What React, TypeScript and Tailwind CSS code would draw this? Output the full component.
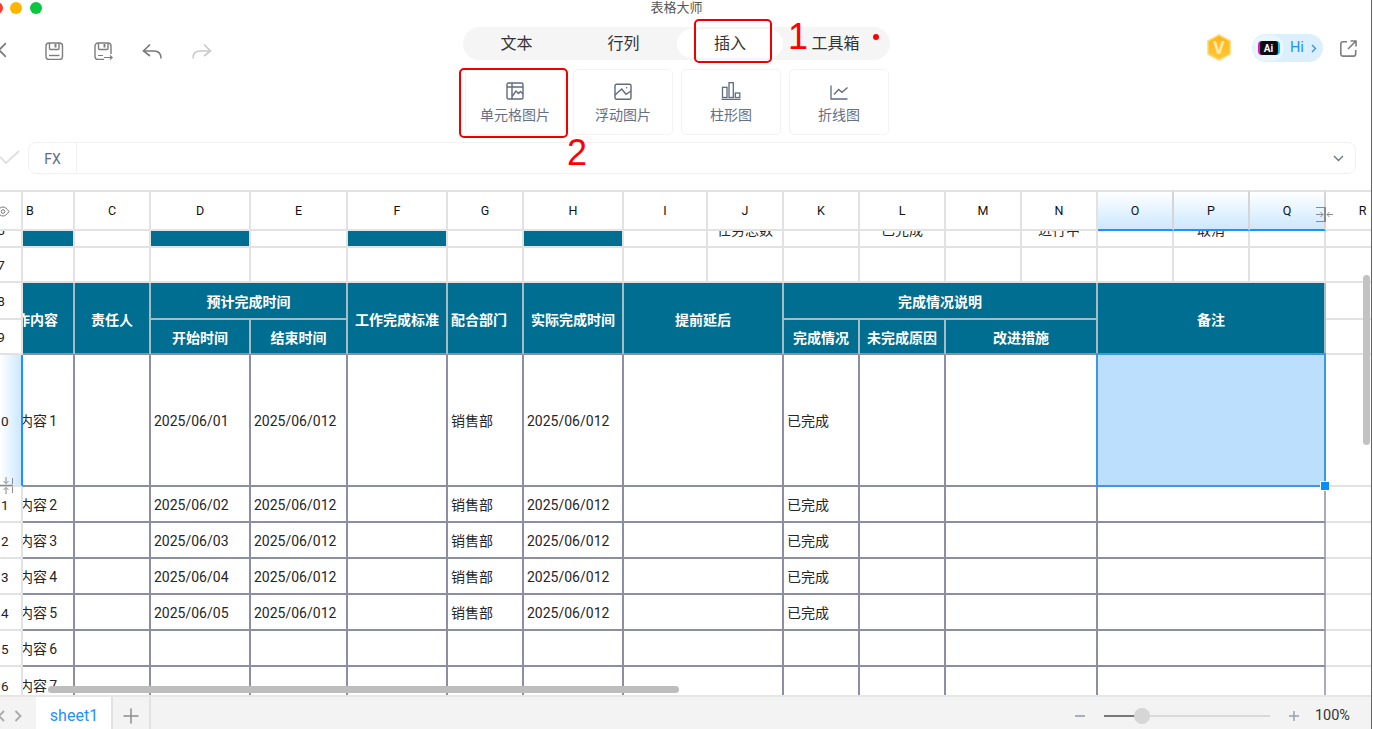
import React from "react";

const light = "border-r-2 border-b-2 border-[#e2e2e2]";
const dark = "border-r-2 border-b-2 border-[#8c8ea3]";
const darkEnd = "border-r-2 border-r-[#a9abbc] border-b-2 border-b-[#8c8ea3]";
const teal = "bg-[#006e91] border-r-2 border-b-2 border-[#a6bcc4] pt-[4px] text-white font-semibold text-[14px] flex items-center justify-center whitespace-nowrap";
const tealLow = "bg-[#006e91] border-r-2 border-r-[#a6bcc4] border-b-2 border-b-[#8c8ea3] pt-[4px] text-white font-semibold text-[14px] flex items-center justify-center whitespace-nowrap overflow-hidden";
const cellText = "flex items-center overflow-hidden whitespace-nowrap pt-[2px] text-[14px] text-[#262626]";

function RowNo({ n }: { n: string }) {
  return <div className="ml-[-21px] w-[44px] shrink-0 pt-[2px] text-center text-[13.500px] text-[#222]">{n}</div>;
}

function Item({ label, num }: { label: string; num: string }) {
  return (
    <span className="shrink-0">
      {label}
      <span className="ml-[2px]">{num}</span>
    </span>
  );
}

function Save({ arrow }: { arrow?: boolean }) {
  return (
    <svg width="19" height="19" viewBox="0 0 19 19" fill="none" stroke="#7d7d7d" strokeWidth="1.4">
      {arrow ? (
        <path d="M10 17.5H4a3 3 0 0 1-3-3V4a3 3 0 0 1 3-3h10a3 3 0 0 1 3 3v8" />
      ) : (
        <rect x="1" y="1" width="16.5" height="16.5" rx="3" />
      )}
      <path d="M4.5 1v5.5a1 1 0 0 0 1 1h7.5a1 1 0 0 0 1-1V1" />
      <path d="M10.5 2v3.5" strokeWidth="2" />
      {!arrow && <path d="M4 13.5h10.5" />}
      {arrow && <path d="M4 13.5h5M10 15.5h8M16 13.5l2.2 2-2.2 2" strokeWidth="1.2" />}
    </svg>
  );
}

function Undo({ color, flip }: { color: string; flip?: boolean }) {
  return (
    <svg width="21" height="16" viewBox="0 0 21 16" fill="none" stroke={color} strokeWidth="1.6" className={flip ? "-scale-x-100" : ""}>
      <path d="M8 1.5 1.5 8 8 13" />
      <path d="M1.5 8H12c4 0 7 2.5 7 7.5" />
    </svg>
  );
}

const toolStroke = "#5f6b7e";

function CellImgIcon() {
  return (
    <svg width="18" height="18" viewBox="0 0 18 18" fill="none" stroke={toolStroke} strokeWidth="1.4">
      <rect x="1" y="1" width="16" height="16" rx="1.5" />
      <path d="M1 5h16M6 1v16" />
      <path d="M6 14.500 10 9l2.500 2.500 2-2 2.500 2.500" />
    </svg>
  );
}
function FloatImgIcon() {
  return (
    <svg width="18" height="18" viewBox="0 0 18 18" fill="none" stroke={toolStroke} strokeWidth="1.4">
      <rect x="1" y="2.300" width="16" height="15" rx="1.500" />
      <path d="M1 13l6.700-6 4.300 5.300 5-3.300" />
      <circle cx="12.700" cy="5.700" r="0.800" fill={toolStroke} stroke="none" />
    </svg>
  );
}
function BarIcon() {
  return (
    <svg width="20" height="18" viewBox="0 0 20 18" fill="none" stroke={toolStroke} strokeWidth="1.300">
      <path d="M0.500 17.400h19" />
      <rect x="1.500" y="5.300" width="4.500" height="10.200" />
      <rect x="8" y="0.700" width="4.300" height="14.800" />
      <rect x="14.300" y="11" width="4.500" height="4.500" />
    </svg>
  );
}
function LineIcon() {
  return (
    <svg width="18" height="18" viewBox="0 0 18 18" fill="none" stroke={toolStroke} strokeWidth="1.300">
      <path d="M1 3.500V17h16.500" />
      <path d="M4 12.500 8.700 7.500 12 10.300 17.500 5.500" />
    </svg>
  );
}

function ToolCard({ icon, label }: { icon: React.ReactNode; label: string }) {
  return (
    <div className="flex h-[66px] w-[100px] flex-col items-center rounded-[5px] border border-[#f3f3f3] pt-[12px]">
      <div className="flex h-[18px] items-center">{icon}</div>
      <div className="mt-[5px] text-[14px] leading-[20px] text-[#667085]">{label}</div>
    </div>
  );
}

function ResizeH() {
  return (
    <svg width="18" height="15" viewBox="0 0 18 15" fill="none" stroke="#8a8a8a" strokeWidth="1">
      <path d="M0 7.500h7M4.500 5 7 7.500 4.500 10M17 7.500h-6M13.500 5 11 7.500l2.500 2.500" />
      <path d="M0 0.500h8M0 14.500h8" />
      <path d="M9 0v15" strokeWidth="2" />
    </svg>
  );
}
function ResizeV() {
  return (
    <svg width="14" height="17" viewBox="0 0 14 17" fill="none" stroke="#8a8a8a" strokeWidth="1">
      <path d="M6 0v6.500M3.500 4 6 6.500 8.500 4M6 17v-6.500M3.500 13 6 10.500 8.500 13" />
      <path d="M12.500 1v6M12.500 10v6" />
      <path d="M0 8.500h13" strokeWidth="1.500" />
    </svg>
  );
}

const letters = ["C", "D", "E", "F", "G", "H", "I", "J", "K", "L", "M", "N"];

function Blank({ c }: { c: string }) {
  return <div className={c} />;
}

function DataRow({ no, num, start, end, dept, state, last }: { no: string; num: string; start?: string; end?: string; dept?: string; state?: string; last?: boolean }) {
  const v = last ? "items-start leading-[34px]" : "";
  return (
    <>
      <div className={`${light} flex items-center overflow-hidden ${v}`}>
        <RowNo n={no} />
      </div>
      <div className={`${dark} ${cellText} ${v} justify-end pr-[16px]`}>
        <Item label="工作内容" num={num} />
      </div>
      <Blank c={dark} />
      <div className={`${dark} ${cellText} ${v} pl-[3px]`}>{start}</div>
      <div className={`${dark} ${cellText} ${v} pl-[3px]`}>{end}</div>
      <Blank c={dark} />
      <div className={`${dark} ${cellText} ${v} pl-[3px]`}>{dept}</div>
      <div className={`${dark} ${cellText} ${v} pl-[3px]`}>{end}</div>
      <Blank c={`${dark} col-span-2`} />
      <div className={`${dark} ${cellText} ${v} pl-[3px]`}>{state}</div>
      <Blank c={dark} />
      <Blank c={`${dark} col-span-2`} />
      <Blank c={`${darkEnd} col-span-3`} />
      <Blank c={light} />
    </>
  );
}

function Sheet() {
  return (
    <div className="relative h-[505px] shrink-0 overflow-hidden">
      <div className="grid h-[505px] grid-cols-[23px_52px_76px_100px_97px_100px_76px_100px_84px_76px_76px_86px_76px_76px_76px_76px_76px_47px] grid-rows-[41px_17px_35px_37px_35px_132px_36px_36px_36px_36px_36px_30px]">
        {/* column letters */}
        <div className={`${light} flex items-center overflow-hidden border-t-2 pt-[2px]`}>
          <svg width="14" height="11" viewBox="0 0 14 11" fill="none" stroke="#777" strokeWidth="1" className="ml-[-4px] shrink-0">
            <path d="M1 5.500C3 2.500 5 1 7 1s4 1.500 6 4.500C11 8.500 9 10 7 10S3 8.500 1 5.500Z" />
            <circle cx="7" cy="5.500" r="1.800" />
          </svg>
        </div>
        <div className={`${light} flex items-center border-t-2 pt-[2px] pl-[3px] text-[12.500px] text-[#111]`}>B</div>
        {letters.map((l) => (
          <div key={l} className={`${light} flex items-center justify-center border-t-2 pt-[2px] text-[12.500px] text-[#111]`}>
            {l}
          </div>
        ))}
        {["O", "P", "Q"].map((l) => (
          <div key={l} className="flex items-center justify-center border-t-2 border-r-2 border-b-2 border-t-[#e2e2e2] border-r-[#d5d5d5] border-b-[#1e90ff] bg-linear-to-b from-white to-[#cce8ff] pt-[2px] text-[12.500px] text-[#111]">
            {l}
          </div>
        ))}
        <div className={`${light} flex items-center justify-center border-t-2 pt-[2px] pl-[28px] text-[12.500px] text-[#111]`}>R</div>

        {/* row 6: clipped by the frozen header */}
        <div className={`${light} flex items-end overflow-hidden`}>
          <div className="ml-[-21px] flex h-[32px] w-[44px] shrink-0 items-center justify-center text-[13.500px] text-[#222]">6</div>
        </div>
        <Blank c={`${light} bg-[#006e91]`} />
        <Blank c={light} />
        <Blank c={`${light} bg-[#006e91]`} />
        <Blank c={light} />
        <Blank c={`${light} bg-[#006e91]`} />
        <Blank c={light} />
        <Blank c={`${light} bg-[#006e91]`} />
        <Blank c={light} />
        {["任务总数", "", "已完成", "", "进行中", "", "取消", "", ""].map((t, i) => (
          <div key={i} className={`${light} flex items-end justify-center overflow-hidden text-[14px] text-[#262626]`}>
            {t && <div className="flex h-[32px] shrink-0 items-center whitespace-nowrap">{t}</div>}
          </div>
        ))}

        {/* row 7 */}
        <div className={`${light} flex items-center overflow-hidden`}>
          <RowNo n="7" />
        </div>
        {Array.from({ length: 17 }).map((_, i) => (
          <Blank key={i} c={light} />
        ))}

        {/* rows 8 and 9: table head */}
        <div className={`${light} flex items-center overflow-hidden`}>
          <RowNo n="8" />
        </div>
        <div className={`${tealLow} row-span-2 justify-end pr-[15px]`}>
          <span className="shrink-0">工作内容</span>
        </div>
        <div className={`${tealLow} row-span-2`}>责任人</div>
        <div className={`${teal} col-span-2`}>预计完成时间</div>
        <div className={`${tealLow} row-span-2`}>工作完成标准</div>
        <div className={`${tealLow} row-span-2 justify-start pl-[3px]`}>配合部门</div>
        <div className={`${tealLow} row-span-2`}>实际完成时间</div>
        <div className={`${tealLow} col-span-2 row-span-2`}>提前延后</div>
        <div className={`${teal} col-span-4`}>完成情况说明</div>
        <div className={`${tealLow} col-span-3 row-span-2`}>备注</div>
        <Blank c={light} />

        <div className={`${light} flex items-center overflow-hidden`}>
          <RowNo n="9" />
        </div>
        <div className={tealLow}>开始时间</div>
        <div className={tealLow}>结束时间</div>
        <div className={tealLow}>完成情况</div>
        <div className={tealLow}>未完成原因</div>
        <div className={`${tealLow} col-span-2`}>改进措施</div>
        <Blank c={light} />

        {/* row 10 with the selected cell */}
        <div className="flex items-center overflow-hidden border-r-2 border-b-2 border-r-[#1e90ff] border-b-[#e2e2e2] bg-linear-to-r from-white to-[#cce8ff]">
          <RowNo n="10" />
        </div>
        <div className={`${dark} ${cellText} justify-end pr-[16px]`}>
          <Item label="工作内容" num="1" />
        </div>
        <Blank c={dark} />
        <div className={`${dark} ${cellText} pl-[3px]`}>2025/06/01</div>
        <div className={`${dark} ${cellText} pl-[3px]`}>2025/06/012</div>
        <Blank c={dark} />
        <div className={`${dark} ${cellText} pl-[3px]`}>销售部</div>
        <div className={`${dark} ${cellText} pl-[3px]`}>2025/06/012</div>
        <Blank c={`${dark} col-span-2`} />
        <div className={`${dark} ${cellText} pl-[3px]`}>已完成</div>
        <Blank c={dark} />
        <Blank c={`${dark} col-span-2`} />
        <div className="relative z-10 col-span-3 -mt-[2px] -ml-[2px] border-2 border-[#3d97e4] bg-[#bbdffc]">
          <div className="absolute -right-[6px] -bottom-[6px] h-[10px] w-[10px] border border-white bg-[#0a8cff]" />
        </div>
        <Blank c={light} />

        <DataRow no="11" num="2" start="2025/06/02" end="2025/06/012" dept="销售部" state="已完成" />
        <DataRow no="12" num="3" start="2025/06/03" end="2025/06/012" dept="销售部" state="已完成" />
        <DataRow no="13" num="4" start="2025/06/04" end="2025/06/012" dept="销售部" state="已完成" />
        <DataRow no="14" num="5" start="2025/06/05" end="2025/06/012" dept="销售部" state="已完成" />
        <DataRow no="15" num="6" />
        <DataRow no="16" num="7" last />
      </div>

      {/* overlays: resize cursors and scrollbars */}
      <div className="absolute top-[17px] left-[1316px]">
        <ResizeH />
      </div>
      <div className="absolute top-[287px] left-0">
        <ResizeV />
      </div>
      <div className="absolute top-[496px] left-[48px] h-[7px] w-[631px] rounded-full bg-[#bdbdbd]" />
      <div className="absolute top-[85px] left-[1363px] h-[170px] w-[7px] rounded-full bg-[#c2c2c2]" />
    </div>
  );
}

function Footer() {
  return (
    <div className="flex h-[34px] shrink-0 items-stretch border-t-2 border-[#e6e6e6] bg-[#f3f3f3]">
      <div className="flex w-[36px] items-center overflow-hidden pt-[5px]">
        <svg width="24" height="14" viewBox="0 0 24 14" fill="none" stroke="#a9a9a9" strokeWidth="1.800" className="ml-[-2px] shrink-0">
          <path d="M6 2 1 7l5 5M17.500 2l5 5-5 5" />
        </svg>
      </div>
      <div className="flex w-[77px] items-center justify-center border-r-2 border-[#e2e2e2] bg-white pt-[5px] pl-[1px] text-[16px] text-[#1e90ff]">sheet1</div>
      <div className="flex w-[38px] items-center justify-center border-r-2 border-[#e2e2e2] pt-[5px]">
        <svg width="16" height="16" viewBox="0 0 16 16" fill="none" stroke="#8d8d8d" strokeWidth="1.500">
          <path d="M8 0.500v15M0.500 8h15" />
        </svg>
      </div>
      <div className="ml-auto flex items-center pt-[5px] pr-[21px]">
        <div className="h-[2px] w-[10px] bg-[#a9adb8]" />
        <div className="relative ml-[19px] h-[2px] w-[166px] bg-[#d9d9d9]">
          <div className="h-[2px] w-[32px] bg-[#777]" />
          <div className="absolute top-[-7px] left-[30px] h-[16px] w-[16px] rounded-full bg-[#d6d6d6]" />
        </div>
        <svg width="10" height="10" viewBox="0 0 10 10" fill="none" stroke="#9ba0ac" strokeWidth="1.500" className="ml-[19px]">
          <path d="M5 0v10M0 5h10" />
        </svg>
        <div className="ml-[16px] text-[14.500px] text-[#333]">100%</div>
      </div>
    </div>
  );
}

export default function App() {
  return (
    <div className="relative h-[729px] w-[1373px] overflow-hidden bg-white pr-px [font-family:Roboto,'Noto_Sans_CJK_SC',sans-serif]">
      <div className="flex h-[729px] flex-col border-r border-[#5b6478]">
        <div className="grid grid-cols-[463px_427px_1fr]">
          {/* title bar */}
          <div className="flex h-[15px] items-start pt-[2px]">
            <div className="ml-[-9px] h-[12px] w-[12px] rounded-full bg-[#ff3b30]" />
            <div className="ml-[7px] h-[12px] w-[12px] rounded-full bg-[#ffb400]" />
            <div className="ml-[8px] h-[12px] w-[12px] rounded-full bg-[#0ac73f]" />
          </div>
          <div className="flex h-[15px] items-center justify-center text-[13px] text-[#555]">表格大师</div>
          <div />

          {/* toolbar */}
          <div className="flex h-[45px] items-start overflow-hidden pt-[27px]">
            <svg width="8" height="16" viewBox="0 0 8 16" fill="none" stroke="#777" strokeWidth="1.600" className="ml-[-2px] shrink-0">
              <path d="M8 1 1 8l7 7" />
            </svg>
            <div className="ml-[39px]">
              <Save />
            </div>
            <div className="ml-[30px]">
              <Save arrow />
            </div>
            <div className="mt-[1px] ml-[29px]">
              <Undo color="#7a7a7a" />
            </div>
            <div className="mt-[1px] ml-[28px]">
              <Undo color="#c9c9c9" flip />
            </div>
          </div>
          <div className="pt-[12px]">
            <div className="relative flex h-[33px] w-[427px] items-center rounded-full bg-[#f5f5f5] text-[16px] text-[#333]">
              <div className="flex h-[33px] w-[107px] items-center justify-center">文本</div>
              <div className="flex h-[33px] w-[107px] items-center justify-center">行列</div>
              <div className="flex h-[29px] w-[106px] items-center justify-center rounded-full bg-white">插入</div>
              <div className="flex h-[33px] w-[107px] items-center justify-center pr-[2px]">工具箱</div>
              <div className="absolute top-[7px] left-[410px] h-[6px] w-[6px] rounded-full bg-[#f00]" />
            </div>
          </div>
          <div className="flex h-[45px] items-start justify-end pt-[20px] pr-[14px]">
            <svg width="26" height="27" viewBox="0 0 26 27" className="mt-[-1px] mr-[1px]">
              <defs>
                <linearGradient id="gold" x1="0" y1="0" x2="0" y2="1">
                  <stop offset="0" stopColor="#ffb31a" />
                  <stop offset="1" stopColor="#ffc738" />
                </linearGradient>
              </defs>
              <polygon points="13,1 24,7 24,20 13,26 2,20 2,7" fill="url(#gold)" stroke="#ffd86b" strokeWidth="1.500" strokeLinejoin="round" />
              <text x="13" y="20" textAnchor="middle" fontSize="18" fontWeight="700" fill="#ffe9ad" fontFamily="Roboto, sans-serif">V</text>
            </svg>
            <div className="mt-[-1px] ml-[19px] flex h-[28px] w-[71px] items-center rounded-full bg-[#dcefff] pl-[1px]">
              <div className="flex h-[26px] w-[31px] items-center justify-center rounded-full bg-[#e9f5ff]">
                <div className="flex h-[14px] w-[22px] items-center justify-center rounded-[4px] border-r-2 border-l-2 border-r-[#18c8ef] border-l-[#e815c5] bg-[#0b0b12] text-[10px] font-bold text-white">Ai</div>
              </div>
              <div className="ml-[6px] text-[14.500px] text-[#1e90ff]">Hi</div>
              <svg width="6" height="9" viewBox="0 0 6 9" fill="none" stroke="#1e90ff" strokeWidth="1.300" className="ml-[7px]">
                <path d="M1 1l3.500 3.500L1 8" />
              </svg>
            </div>
            <svg width="17" height="17" viewBox="0 0 17 17" fill="none" stroke="#7d7d7d" strokeWidth="1.600" className="mt-[5px] ml-[17px]">
              <path d="M7 1.700H3a2.200 2.200 0 0 0-2.200 2.200v10a2.200 2.200 0 0 0 2.200 2.200h10.500a2.200 2.200 0 0 0 2.200-2.200V10" />
              <path d="M8 9l8-8M10.500 1H16v5.500" />
            </svg>
          </div>
        </div>

        {/* tool cards */}
        <div className="mt-[9px] ml-[465px] flex gap-[8px]">
          <ToolCard icon={<CellImgIcon />} label="单元格图片" />
          <ToolCard icon={<FloatImgIcon />} label="浮动图片" />
          <ToolCard icon={<BarIcon />} label="柱形图" />
          <ToolCard icon={<LineIcon />} label="折线图" />
        </div>

        {/* formula bar */}
        <div className="mt-[7px] flex h-[32px] shrink-0 items-center">
          <svg width="22" height="16" viewBox="0 0 22 16" fill="none" stroke="#dfdfdf" strokeWidth="1.800" className="ml-[-1px] shrink-0">
            <path d="M1 7l6 6L20 1" />
          </svg>
          <div className="ml-[7px] flex h-[32px] w-[1328px] items-center rounded-[8px] border border-[#f1f1f1]">
            <div className="flex h-full w-[48px] items-center justify-center border-r border-[#f1f1f1] pt-[2px] text-[14px] text-[#5f6b85]">FX</div>
            <svg width="11" height="7" viewBox="0 0 11 7" fill="none" stroke="#6b7280" strokeWidth="1.300" className="mr-[11px] ml-auto">
              <path d="M1 1l4.500 4.500L10 1" />
            </svg>
          </div>
        </div>

        <div className="h-[16px] shrink-0" />
        <Sheet />
        <Footer />
      </div>

      {/* red annotations laid over the screenshot */}
      <div className="absolute top-[19px] left-[694px] h-[44px] w-[78px] rounded-[5px] border-[2.500px] border-[#ee0000]" />
      <div className="absolute top-[68px] left-[459px] h-[70px] w-[109px] rounded-[5px] border-[2.500px] border-[#ee0000]" />
      <div className="absolute top-[16px] left-[788px] text-[36px] leading-[42px] text-[#f00] [font-family:'Liberation_Sans',sans-serif]">1</div>
      <div className="absolute top-[132px] left-[567px] text-[36px] leading-[42px] text-[#f00] [font-family:'Liberation_Sans',sans-serif]">2</div>
    </div>
  );
}
